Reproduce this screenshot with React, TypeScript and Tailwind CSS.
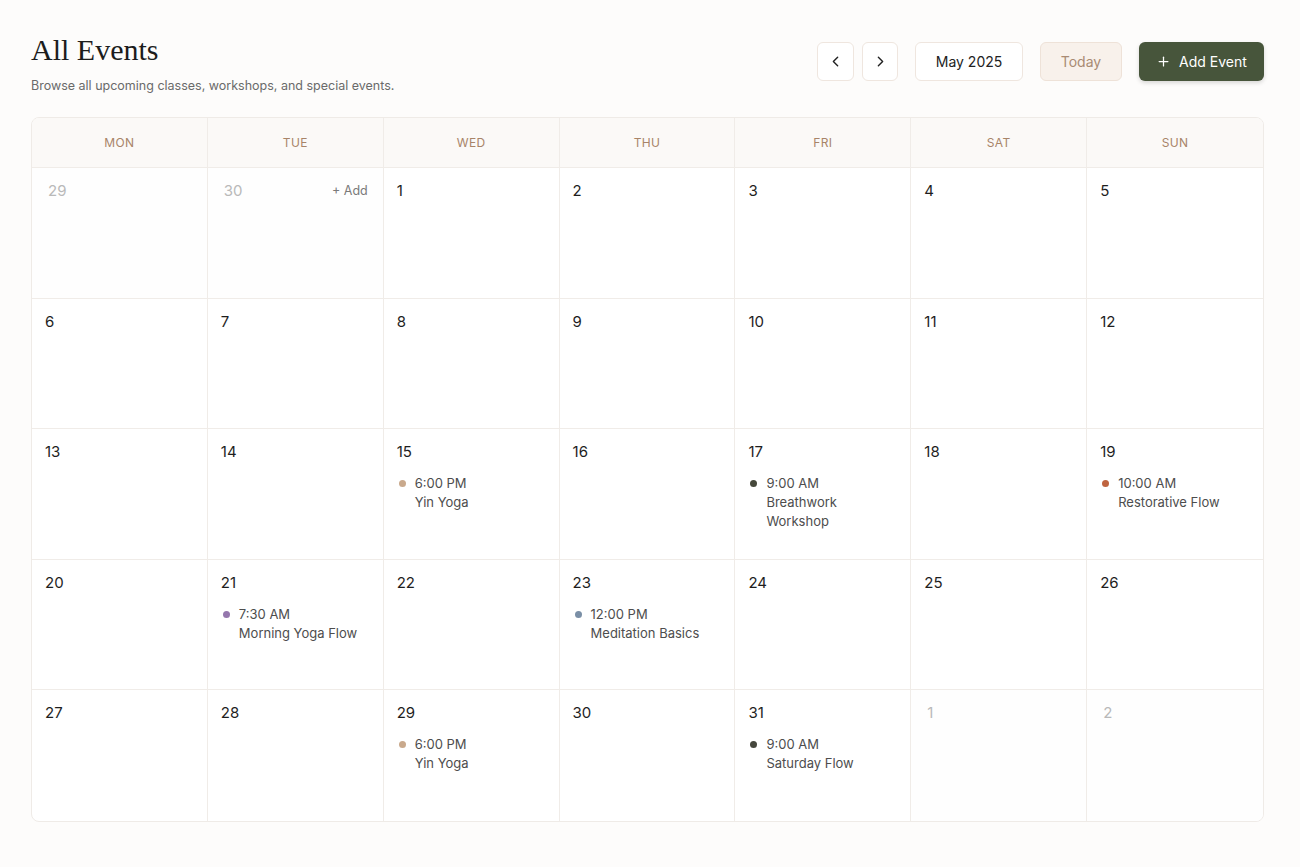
import React from "react";
import { ChevronLeft, ChevronRight, Plus } from "lucide-react";

type Ev = { time: string; name: string; dot: string };
type Day = { n: number; other?: boolean; add?: boolean; events?: Ev[] };

const yin: Ev[] = [{ time: "6:00 PM", name: "Yin Yoga", dot: "bg-[#c9a98c]" }];

const days: Day[] = [
  { n: 29, other: true },
  { n: 30, other: true, add: true },
  { n: 1 }, { n: 2 }, { n: 3 }, { n: 4 }, { n: 5 },
  { n: 6 }, { n: 7 }, { n: 8 }, { n: 9 }, { n: 10 }, { n: 11 }, { n: 12 },
  { n: 13 }, { n: 14 }, { n: 15, events: yin }, { n: 16 },
  { n: 17, events: [{ time: "9:00 AM", name: "Breathwork Workshop", dot: "bg-[#45483a]" }] },
  { n: 18 },
  { n: 19, events: [{ time: "10:00 AM", name: "Restorative Flow", dot: "bg-[#bf6440]" }] },
  { n: 20 },
  { n: 21, events: [{ time: "7:30 AM", name: "Morning Yoga Flow", dot: "bg-[#9577ad]" }] },
  { n: 22 },
  { n: 23, events: [{ time: "12:00 PM", name: "Meditation Basics", dot: "bg-[#7a8fa6]" }] },
  { n: 24 }, { n: 25 }, { n: 26 },
  { n: 27 }, { n: 28 }, { n: 29, events: yin }, { n: 30 },
  { n: 31, events: [{ time: "9:00 AM", name: "Saturday Flow", dot: "bg-[#45473d]" }] },
  { n: 1, other: true }, { n: 2, other: true },
];

const heads = ["MON", "TUE", "WED", "THU", "FRI", "SAT", "SUN"];

export default function App() {
  return (
    <div
      className="min-h-[867px] w-[1300px] bg-[#fdfcfb] pl-[31px] pr-[36px] pt-[32px]"
      style={{ fontFamily: "Inter, 'Noto Sans', sans-serif" }}
    >
      <div className="flex items-start justify-between">
        <div>
          <h1
            className="text-[30px] leading-9 text-[#1c1c1c]"
            style={{ fontFamily: "'Liberation Serif', 'DejaVu Serif', serif" }}
          >
            All Events
          </h1>
          <p className="mt-[9px] text-[12.5px] leading-[18px] text-[#6a6a6a]">
            Browse all upcoming classes, workshops, and special events.
          </p>
        </div>
        <div className="mt-[10px] flex items-center">
          <button className="flex h-[39px] w-[37px] items-center justify-center rounded-md border border-[#efe6df] bg-white text-[#222]">
            <ChevronLeft size={17} strokeWidth={2} />
          </button>
          <button className="ml-[8px] flex h-[39px] w-[36px] items-center justify-center rounded-md border border-[#efe6df] bg-white text-[#222]">
            <ChevronRight size={17} strokeWidth={2} />
          </button>
          <div className="ml-[17px] flex h-[39px] w-[108px] items-center justify-center rounded-md border border-[#efe6df] bg-white text-[14px] text-[#222]">
            May 2025
          </div>
          <button className="ml-[17px] flex h-[39px] w-[82px] items-center justify-center rounded-md border border-[#eee2d8] bg-[#f8f1eb] text-[14px] text-[#a98b73]">
            Today
          </button>
          <button className="ml-[17px] flex h-[39px] w-[125px] items-center justify-center gap-[8px] rounded-md bg-[#47553b] text-[14px] text-white shadow-[0_2px_4px_rgba(0,0,0,0.15)]">
            <Plus size={15} strokeWidth={2} />
            Add Event
          </button>
        </div>
      </div>

      <div className="mt-[22px] overflow-hidden rounded-lg border border-[#efebe7] bg-white">
        <div className="grid grid-cols-7 border-b border-[#f0ece8] bg-[#fbf9f7]">
          {heads.map((h, i) => (
            <div
              key={h}
              className={`flex h-[49px] items-center justify-center text-[12px] tracking-[0.03em] text-[#a88468] ${i < 6 ? "border-r border-[#f0ece8]" : ""}`}
            >
              {h}
            </div>
          ))}
        </div>
        <div className="grid grid-cols-7">
          {days.map((d, i) => {
            const col = i % 7;
            const row = Math.floor(i / 7);
            return (
              <div
                key={i}
                className={`h-[130.5px] pl-[13px] pr-[15px] pt-[13px] ${col < 6 ? "border-r border-[#f0ece8]" : ""} ${row < 4 ? "border-b border-[#f0ece8]" : ""} ${d.other ? "bg-[#fefefe]" : ""}`}
              >
                <div className="flex items-center justify-between">
                  <span
                    className={`text-[15px] leading-5 ${d.other ? "pl-[3px] text-[#b9b9b9]" : "text-[#1e1e1e]"}`}
                  >
                    {d.n}
                  </span>
                  {d.add && (
                    <span className="text-[12.5px] text-[#7a7a7a]">+ Add</span>
                  )}
                </div>
                {d.events?.map((e, k) => (
                  <div key={k} className="mt-[12px] flex items-start pl-[2px]">
                    <span className={`mt-[6px] h-[7px] w-[7px] shrink-0 rounded-full ${e.dot}`} />
                    <div className="ml-[9px] w-[124px] text-[13px] leading-[19px] text-[#4d4d4d]">
                      <div>{e.time}</div>
                      <div>{e.name}</div>
                    </div>
                  </div>
                ))}
              </div>
            );
          })}
        </div>
      </div>
    </div>
  );
}
